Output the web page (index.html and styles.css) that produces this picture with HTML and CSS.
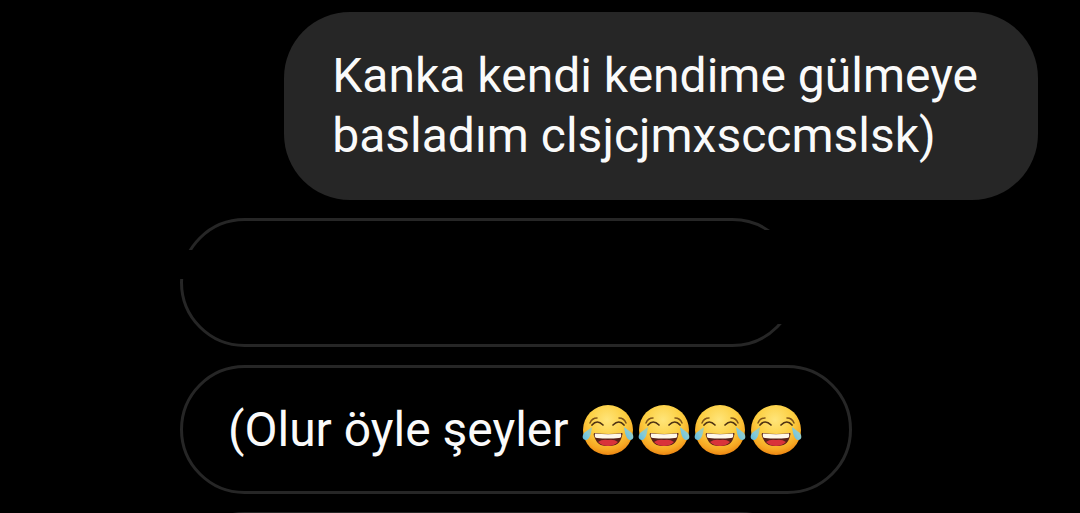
FILE: index.html
```html
<!DOCTYPE html>
<html lang="tr">
<head>
<meta charset="utf-8">
<meta name="viewport" content="width=device-width, initial-scale=1">
<title>Sohbet</title>
<link rel="stylesheet" href="styles.css">
</head>
<body>
<svg class="defs" width="0" height="0" aria-hidden="true">
  <defs>
    <radialGradient id="face" cx="48%" cy="30%" r="72%">
      <stop offset="0" stop-color="#ffe57a"/>
      <stop offset=".5" stop-color="#fccf42"/>
      <stop offset=".82" stop-color="#f7a823"/>
      <stop offset="1" stop-color="#ea8010"/>
    </radialGradient>
    <linearGradient id="tear" x1="1" y1="0" x2="0" y2="1">
      <stop offset="0" stop-color="#b5c99a"/>
      <stop offset=".5" stop-color="#86cbd6"/>
      <stop offset="1" stop-color="#5fb9df"/>
    </linearGradient>
    <symbol id="joy" viewBox="0 0 56 56">
      <circle cx="28" cy="28" r="25" fill="url(#face)"/>
      <path d="M10 21q2-5 7-5M39 16q5 0 7 5" fill="none" stroke="#80551a" stroke-width="1.500" stroke-linecap="round"/>
      <path d="M12 23q5-6 11 0M33 23q6-6 11 0" fill="none" stroke="#4e3212" stroke-width="1.700" stroke-linecap="round"/>
      <path d="M15 31Q28 33 42 31Q43 31 42 34C40 42 36 44 28 44S17 42 14 34Q13 31 15 31Z" fill="#572018"/>
      <path d="M18 40q4-3 10-2q6-1 10 2q-4 4-10 4t-10-4z" fill="#d9333a"/>
      <path d="M15 31.500Q28 33 41 31.500Q42 36 39 36Q28 37 17 36Q14 36 15 31.500Z" fill="#fff8e8"/>
      <path d="M12 25C11 33 9 38 6 38C2 38 2 34 4 31Z" fill="url(#tear)"/>
      <path d="M44 25C45 33 47 38 50 38C54 38 54 34 52 31Z" fill="url(#tear)"/>
    </symbol>
  </defs>
</svg>
<main class="chat">
  <p class="bubble sent">Kanka kendi kendime gülmeye<br>basladım clsjcjmxsccmslsk)</p>
  <div class="bubble received erased"></div>
  <p class="bubble received">(Olur öyle şeyler <span class="emojis" role="img" aria-label="Gülmekten ağlayan yüzler"><svg class="emoji"><use href="#joy"/></svg><svg class="emoji"><use href="#joy"/></svg><svg class="emoji"><use href="#joy"/></svg><svg class="emoji"><use href="#joy"/></svg></span></p>
  <div class="bubble received next"></div>
</main>
</body>
</html>
```
FILE: styles.css
```css
* {
  box-sizing: border-box;
}

body {
  margin: 0;
  height: 100vh;
  overflow: hidden;
  background: #000;
  color: #fafafa;
  font: 48px/60px Roboto, "Noto Sans", sans-serif;
}

.defs {
  position: absolute;
}

.chat {
  display: flex;
  flex-direction: column;
  align-items: flex-start;
  gap: 18px;
  height: 100%;
  overflow: hidden;
  padding: 12px 42px 0 180px;
}

.bubble {
  flex: none;
  margin: 0;
  border-radius: 66px;
  white-space: nowrap;
}

.sent {
  align-self: flex-end;
  padding: 34px 60px 34px 48px;
  background: #262626;
}

.received {
  display: flex;
  align-items: center;
  min-height: 129px;
  padding: 0 45px;
  border: 3px solid #262626;
  white-space: pre;
}

.erased {
  position: relative;
  width: 617px;
}

/* Black patches that interrupt the outline on both sides */
.erased::before,
.erased::after {
  content: "";
  position: absolute;
  background: #000;
}

.erased::before {
  top: 29px;
  left: -4px;
  width: 24px;
  height: 29px;
}

.erased::after {
  top: 9px;
  right: -4px;
  width: 48px;
  height: 94px;
}

.next {
  width: 625px;
}

.emojis {
  display: flex;
}

.emoji {
  width: 56px;
  height: 56px;
}
```
